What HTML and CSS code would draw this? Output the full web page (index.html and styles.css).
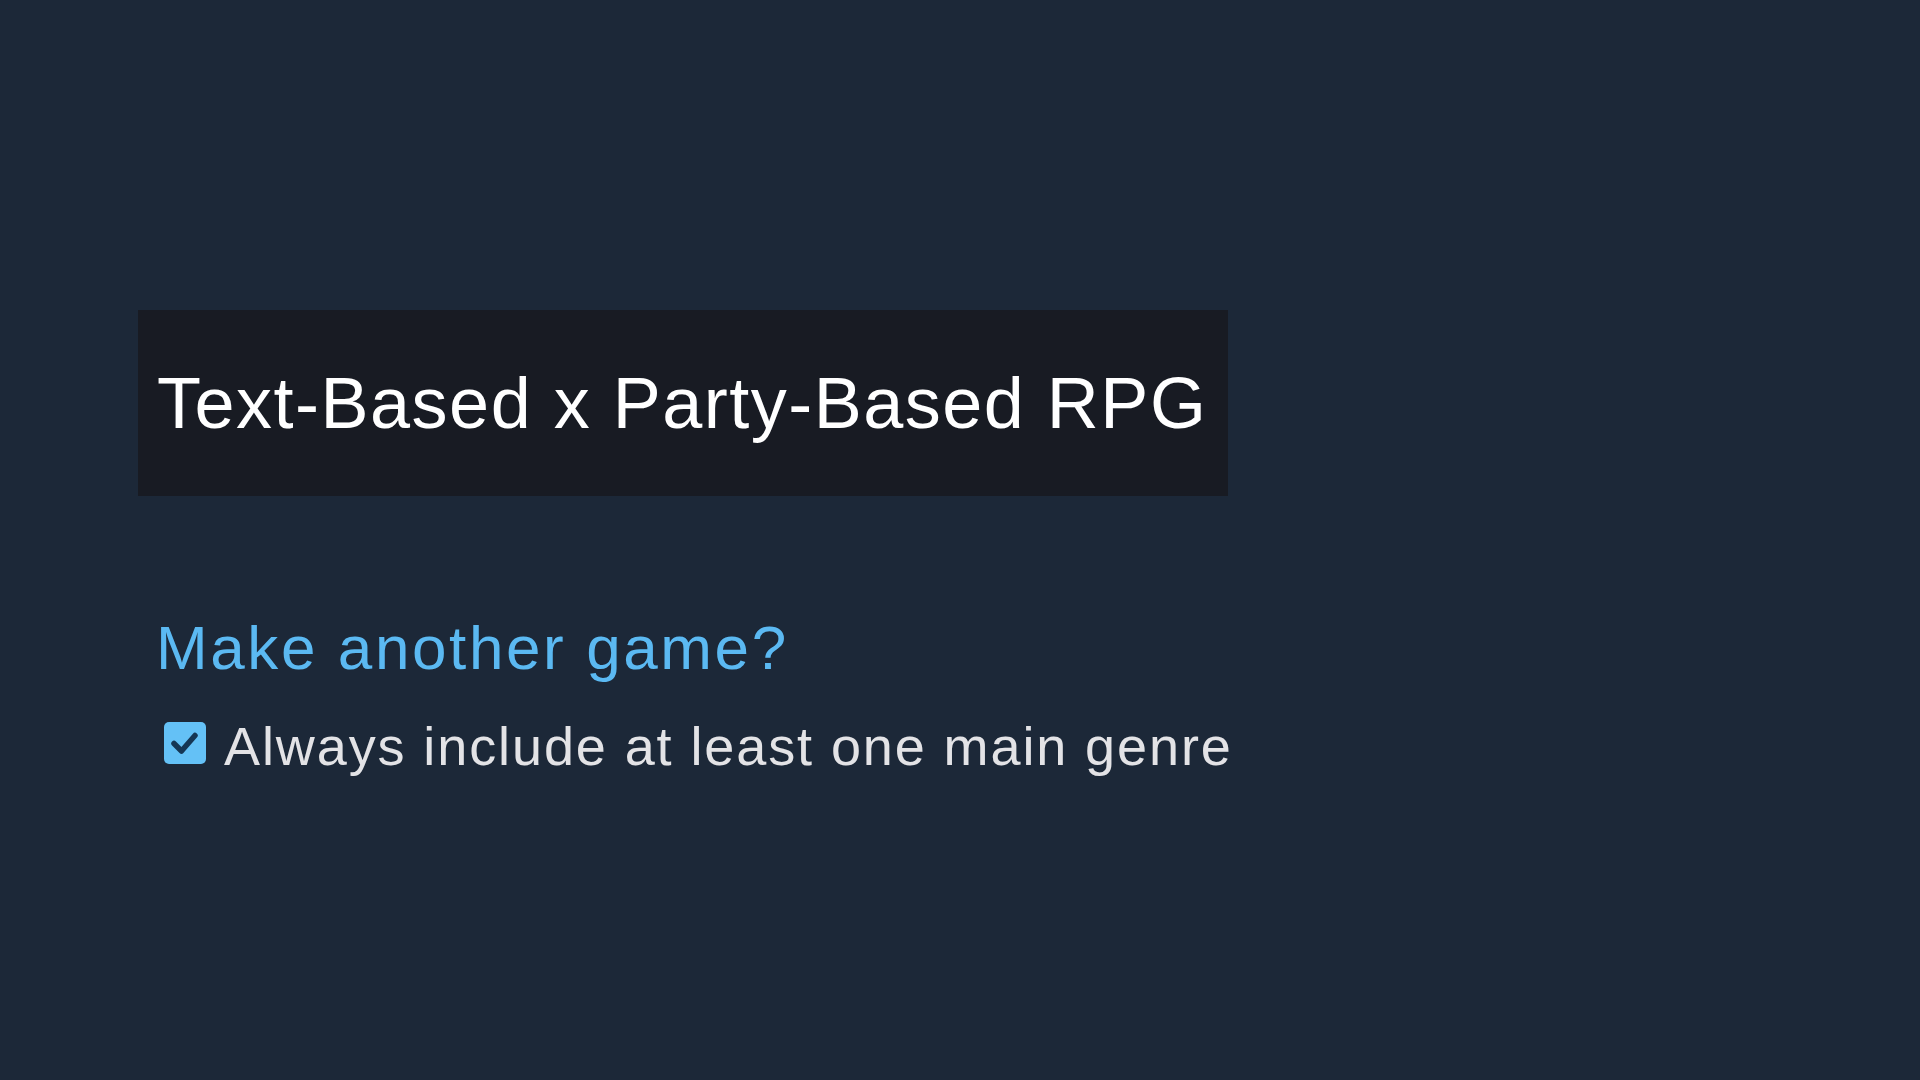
FILE: index.html
```html
<!DOCTYPE html>
<html lang="en">
<head>
<meta charset="utf-8">
<title>Game Generator</title>
<link rel="stylesheet" href="styles.css">
</head>
<body>
<main class="page">
  <div class="result-box">
    <h1 class="result-title">Text-Based x Party-Based RPG</h1>
  </div>
  <section class="again">
    <h2 class="again-title">Make another game?</h2>
    <label class="option">
      <span class="checkbox" aria-hidden="true">
        <svg viewBox="0 0 42 42" width="42" height="42">
          <path d="M10 21.5 L17.5 29 L31 13.5" fill="none" stroke="#153654" stroke-width="5.5" stroke-linecap="round" stroke-linejoin="round"/>
        </svg>
      </span>
      <span class="option-text">Always include at least one main genre</span>
    </label>
  </section>
</main>
</body>
</html>
```
FILE: styles.css
```css
html, body {
  margin: 0;
  padding: 0;
  background: #1c2838;
}

body {
  width: 1920px;
  height: 1080px;
  overflow: hidden;
  font-family: "Liberation Sans", Arial, sans-serif;
}

.page {
  padding: 310px 0 0 138px;
}

.result-box {
  width: 1090px;
  height: 186px;
  box-sizing: border-box;
  padding: 0 19px;
  background: #181b23;
  display: flex;
  align-items: center;
}

.result-title {
  margin: 0;
  font-weight: 400;
  font-size: 72px;
  line-height: 80px;
  letter-spacing: 1.5px;
  color: #ffffff;
  white-space: nowrap;
}

.again {
  margin-top: 116px;
  padding-left: 18px;
}

.again-title {
  margin: 0;
  font-weight: 400;
  font-size: 62px;
  line-height: 72px;
  letter-spacing: 2.6px;
  color: #5bb9f2;
}

.option {
  margin-top: 32px;
  display: flex;
  align-items: flex-start;
  gap: 18px;
}

.checkbox {
  flex: none;
  width: 42px;
  height: 42px;
  margin-top: 6px;
  margin-left: 8px;
  border-radius: 5px;
  background: #64c1f6;
  display: flex;
}

.option-text {
  font-size: 54px;
  line-height: 60px;
  letter-spacing: 1.9px;
  color: #e3e3e6;
  white-space: nowrap;
}
```
